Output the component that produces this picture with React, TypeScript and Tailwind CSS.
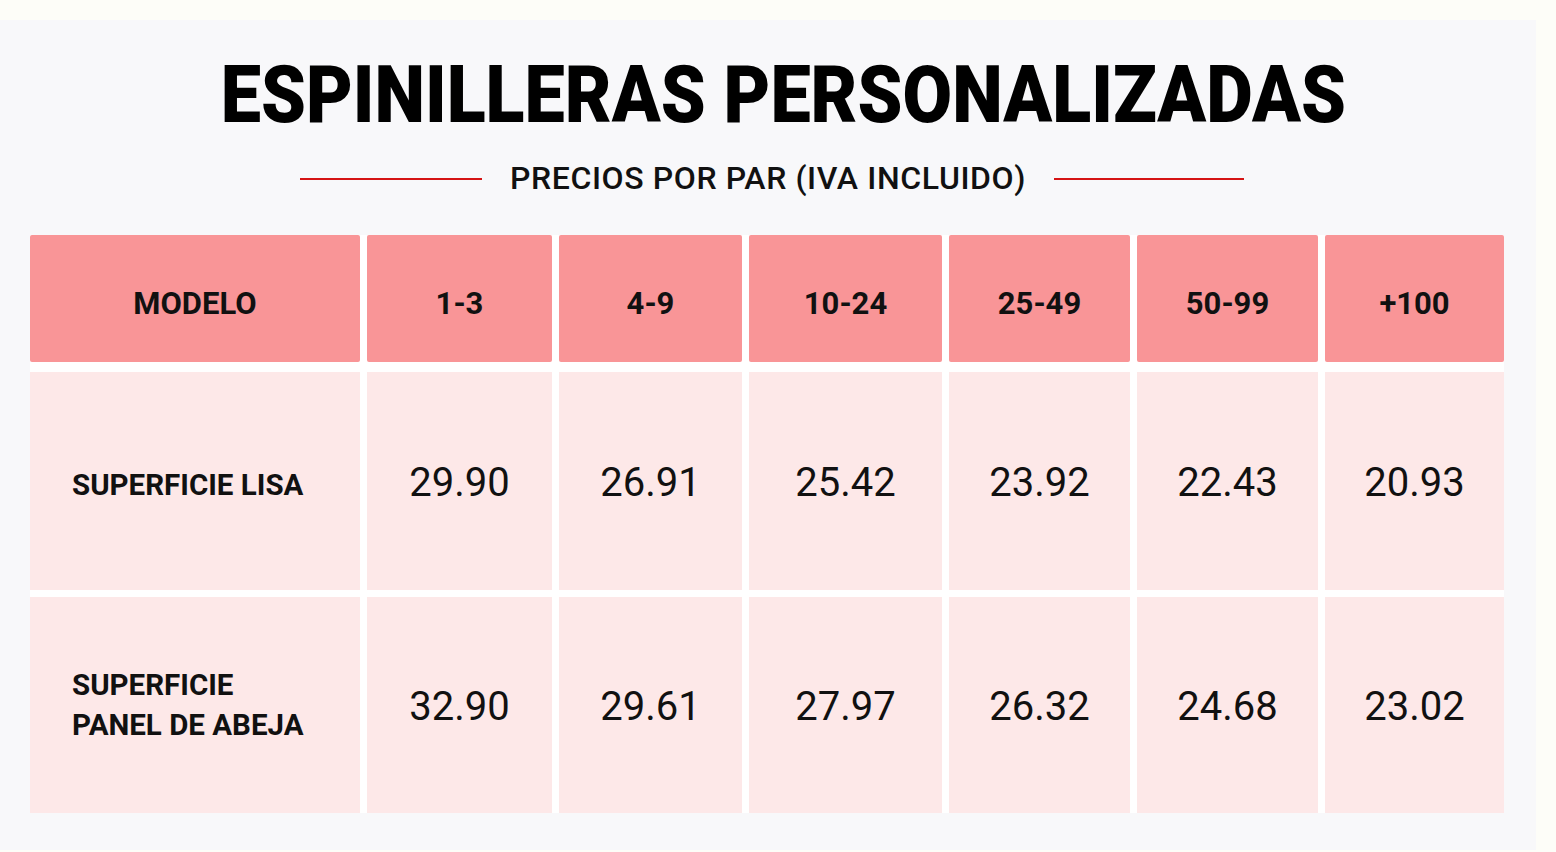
import React from "react";

const headers = ["MODELO", "1-3", "4-9", "10-24", "25-49", "50-99", "+100"];
const rows: { label: React.ReactNode; prices: string[]; h: string; mt: string; lpt: string }[] = [
  {
    label: "SUPERFICIE LISA",
    prices: ["29.90", "26.91", "25.42", "23.92", "22.43", "20.93"],
    h: "h-[218px]",
    mt: "mt-[10px]",
    lpt: "pt-[8px]",
  },
  {
    label: (
      <>
        SUPERFICIE
        <br />
        PANEL DE ABEJA
      </>
    ),
    prices: ["32.90", "29.61", "27.97", "26.32", "24.68", "23.02"],
    h: "h-[216px]",
    mt: "mt-[7px]",
    lpt: "pt-[0px]",
  },
];

const font = { fontFamily: "Roboto, 'Noto Sans', sans-serif" };

export default function App() {
  return (
    <div className="w-[1556px] h-[852px] bg-[#fdfdf8] pt-[20px] overflow-hidden" style={font}>
      <div className="w-[1536px] h-[830px] bg-[#f8f8fa] flex flex-col">
        <div className="mt-[36px] flex justify-center pl-[30px]">
          <h1 className="inline-block text-[79px] leading-none font-black text-black scale-x-[0.91] whitespace-nowrap">
            ESPINILLERAS PERSONALIZADAS
          </h1>
        </div>
        <div className="mt-[27px] flex items-center justify-center gap-[28px] pl-[8px]">
          <div className="w-[182px] h-[2px] bg-[#d51414] mt-[2px]" />
          <div className="text-[32px] leading-none font-medium tracking-[0.6px] text-[#111]">
            PRECIOS POR PAR (IVA INCLUIDO)
          </div>
          <div className="w-[190px] h-[2px] bg-[#d51414] mt-[2px]" />
        </div>
        <div className="mt-[41px] ml-[30px] w-[1474px] bg-white grid grid-cols-[330px_185px_183px_193px_181px_181px_179px] gap-x-[7px]">
          {headers.map((h) => (
            <div
              key={h}
              className="h-[127px] bg-[#f99597] rounded-[2px] flex items-center justify-center pt-[12px] text-[31px] font-bold text-[#111]"
            >
              {h}
            </div>
          ))}
          {rows.map((r, ri) => (
            <React.Fragment key={ri}>
              <div
                className={`${r.h} ${r.mt} ${r.lpt} bg-[#fde8e8] flex items-center pl-[42px] text-[29.5px] leading-[40px] font-bold text-[#111]`}
              >
                <span>{r.label}</span>
              </div>
              {r.prices.map((p) => (
                <div
                  key={p}
                  className={`${r.h} ${r.mt} bg-[#fde8e8] flex items-center justify-center pt-[4px] text-[40px] text-[#111]`}
                >
                  {p}
                </div>
              ))}
            </React.Fragment>
          ))}
        </div>
      </div>
    </div>
  );
}
